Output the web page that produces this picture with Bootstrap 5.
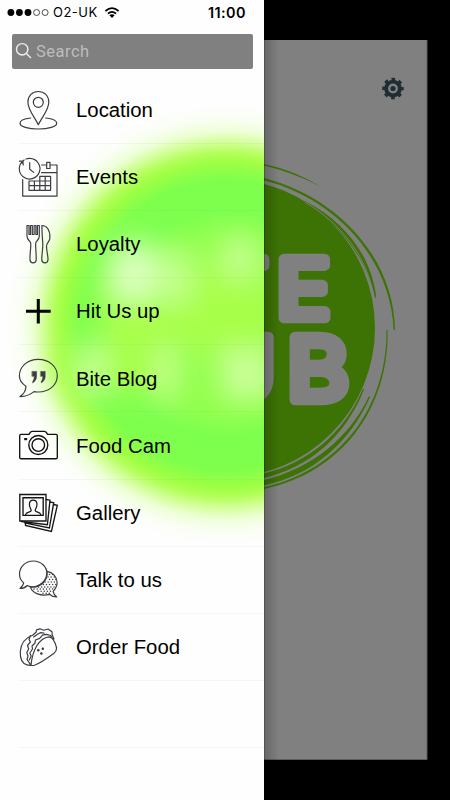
<!DOCTYPE html>
<html lang="en">
<head>
<meta charset="utf-8">
<meta name="viewport" content="width=device-width, initial-scale=1">
<title>Bite Club</title>
<link href="https://cdn.jsdelivr.net/npm/bootstrap@5.3.0/dist/css/bootstrap.min.css" rel="stylesheet">
<style>
body{background:#000;font-family:"Liberation Sans",Arial,sans-serif;color:#000}
.app-shell{width:450px;height:800px}
.side-panel{width:264px;background:#fefefe}
.panel-glow{top:0;left:0}
.status-row{height:24px;padding:1px 18px 0 7px;font-family:Inter,"Open Sans",sans-serif}
.carrier{font-size:13px;letter-spacing:.5px;font-weight:400;margin-left:1px}
.clock-text{font-size:14.4px;letter-spacing:.45px;font-weight:600}
.search-box{height:35.5px;margin:9.5px 11px 7.5px 12px;background:#808080;border-radius:2px;color:#bdbdbd;font:400 16.5px Roboto,sans-serif;letter-spacing:.5px;padding-left:3px}
.menu-row{height:67.2px;margin-left:18px;border-bottom:1px solid rgba(140,140,150,.07);font-size:20.35px}
.menu-label{padding-top:1px}
.menu-row svg{width:40px;height:40px;flex:none;margin-right:18px;fill:none;stroke:#3c3d42;stroke-width:1.2;stroke-linejoin:round;stroke-linecap:round}
.logo-word{font-family:Inter,sans-serif;font-weight:400;stroke-linejoin:round}
</style>
<script src="https://cdn.jsdelivr.net/npm/bootstrap@5.3.0/dist/js/bootstrap.bundle.min.js"></script>
</head>
<body>
<div class="app-shell d-flex overflow-hidden">
<aside class="side-panel position-relative overflow-hidden flex-shrink-0">
<svg class="panel-glow position-absolute" width="264" height="800" viewBox="0 0 264 800">
<defs>
<radialGradient id="glow" gradientUnits="userSpaceOnUse" cx="226" cy="325" r="220">
<stop offset="0" stop-color="#9cff4c"/><stop offset=".4" stop-color="#90ff4c"/><stop offset=".52" stop-color="#7dff4e"/><stop offset=".66" stop-color="#7fff4c"/><stop offset=".74" stop-color="#9eff44"/><stop offset=".78" stop-color="#b2ff58"/><stop offset=".83" stop-color="#d2ff98"/><stop offset=".88" stop-color="#edffd6"/><stop offset=".94" stop-color="#fafef4"/><stop offset="1" stop-color="#fefefe"/>
</radialGradient>
<filter id="soft" x="-60%" y="-60%" width="220%" height="220%"><feGaussianBlur stdDeviation="14"/></filter>
</defs>
<circle cx="226" cy="325" r="220" fill="url(#glow)"/>
<g filter="url(#soft)">
<path d="M60 350L145 345L264 325V365L215 360L190 310L165 390H62Z" fill="#a8ff4a"/>
<rect x="100" y="262" width="170" height="83" fill="#a8ff48"/>
<rect x="112" y="244" width="44" height="56" fill="#dcffc0"/>
<rect x="165" y="250" width="24" height="52" fill="#c8ff9a"/>
<rect x="222" y="236" width="36" height="42" fill="#c4ff90"/>
<rect x="80" y="345" width="26" height="50" fill="#c6ff98"/>
<rect x="157" y="348" width="20" height="52" fill="#caff98"/>
<rect x="222" y="350" width="50" height="50" fill="#caff9a"/>
</g>
</svg>
<div class="position-relative">
<div class="status-row d-flex align-items-center">
<svg width="45" height="10" viewBox="0 0 45 10" class="flex-shrink-0"><circle cx="3.9" cy="4.5" r="3.4"/><circle cx="12.4" cy="4.5" r="3.4"/><circle cx="21" cy="4.5" r="3.4"/><g fill="none" stroke="#222" stroke-width=".8"><circle cx="29.6" cy="4.5" r="3"/><circle cx="38.1" cy="4.5" r="3"/></g></svg>
<span class="carrier">O2-UK</span>
<svg class="ms-1" width="20" height="12" viewBox="-2.5 0 20 12" fill="none" stroke="#000" stroke-width="1.7"><path d="M.9 4Q7.5-1.6 14.1 4M3.4 6.7Q7.5 3 11.6 6.7"/><path d="M4.9 8.3Q7.5 6.3 10.1 8.3L7.5 11Z" fill="#000" stroke="none"/></svg>
<span class="clock-text ms-auto">11:00</span>
</div>
<div class="search-box d-flex align-items-center"><svg width="21" height="20" viewBox="0 0 21 20" fill="none" stroke="#eee" stroke-width="1.4"><circle cx="7.2" cy="8.3" r="5.7"/><path d="M11.3 12.5L16 17"/></svg><span>Search</span></div>
<nav>
<div class="menu-row d-flex align-items-center"><svg viewBox="0 0 40 40"><circle cx="20.3" cy="12.3" r="5"/><path d="M20.3 34.7C17.5 28.5 9.9 20 9.9 12.2C9.9 5.6 14.4 1.5 20.3 1.5S30.8 5.6 30.8 12.2C30.8 20 23.1 28.5 20.3 34.7Z"/><path d="M12.7 28C6.5 28.7 2 30.6 2 33.2C2 36.5 10 39 20.3 39S38.7 36.5 38.7 33.2C38.7 30.6 34 28.7 27.7 28"/></svg><span class="menu-label">Location</span></div>
<div class="menu-row d-flex align-items-center"><svg viewBox="0 0 40 40"><path d="M6.1 3A10.3 10.3 0 1 0 12 1.4Q9.8 1.3 8 2M1.5 4.2L5 4.2L5.2 8M5 4.2L4 6M11.7 5.5V12.2L15.7 15.4M4.7 22.7V39.2H39V8H32M28.7 8H23.6M23.6 15.7H39M28.7 5.3H32V11.5H28.7Z"/><path d="M21.7 19.3H32.6V33.3H11V24H32.6M11 28.7H32.6M16.4 24V33.3M21.8 19.3V33.3M27.2 19.3V33.3"/></svg><span class="menu-label">Events</span></div>
<div class="menu-row d-flex align-items-center"><svg viewBox="0 0 40 40"><path d="M9 1.5H11V10.5H12.5V1.5H14.3V10.5H16.1V1.5H17.9V10.5H19.4V1.5H21.3V12C21.3 16.5 17.6 16.4 17.6 20C17.6 25 18.4 31 18.2 35.7C18 39.8 12.1 39.8 12 35.7C11.8 31 12.8 25 12.8 20C12.8 16.4 9 16.5 9 12ZM23.9 1.5C29.5 1.8 32 7 31.9 14C31.8 18 28.5 18.4 28.5 22.5C28.5 27 30.2 32 30 35.7C29.8 39.8 23.9 39.8 23.8 35.7C23.6 31 25 25 24.8 20C24.6 16 23.9 9 23.9 1.5Z"/></svg><span class="menu-label">Loyalty</span></div>
<div class="menu-row d-flex align-items-center"><svg viewBox="0 0 40 40"><path d="M8 20.2H32.7M20.3 7.9V32.5" stroke="#000" stroke-width="3" stroke-linecap="butt"/></svg><span class="menu-label">Hit Us up</span></div>
<div class="menu-row d-flex align-items-center"><svg viewBox="0 0 40 40"><path d="M8 28.3C3.7 25.5 1.4 22 1.4 17.8C1.4 8.5 9.5 1.4 20.3 1.4S39.3 8.5 39.3 17.8S31 34 20.3 34Q17.5 34.1 16 33.6C12 36.8 7 38.8 2 38.6C5 36.7 7.8 33 8 28.3Z"/><path d="M14.2 13.4H18.6V19Q18.4 22.5 14.7 25V23.6Q16.3 21.5 16.3 18.3H14.2ZM22.8 13.4H27.2V19Q27 22.5 23.3 25V23.6Q24.9 21.5 24.9 18.3H22.8Z" fill="#3c3d42" stroke-width=".5"/></svg><span class="menu-label">Bite Blog</span></div>
<div class="menu-row d-flex align-items-center"><svg viewBox="0 0 40 40"><g stroke="#111" stroke-width="1.35"><path d="M3 8.4H11Q12.5 5.3 14 5.3H26.5Q28 5.3 29.7 8.4H38Q39.3 8.4 39.3 9.7V31.4Q39.3 32.7 38 32.7H3Q1.7 32.7 1.7 31.4V9.7Q1.7 8.4 3 8.4Z"/><circle cx="20.3" cy="19" r="9.5"/><circle cx="20.3" cy="19" r="6.3"/></g><path d="M6.2 12H9.2V14.2H6.2Z" fill="#111" stroke="none"/></svg><span class="menu-label">Food Cam</span></div>
<div class="menu-row d-flex align-items-center"><svg viewBox="0 0 40 40"><g stroke="#151515" stroke-width="1.35" stroke-linejoin="miter"><path d="M1.8 1.5H28V28H1.8ZM5 4.7H25.2V22.3H5Z"/><path d="M7.5 22C8 18.5 12.5 19.8 13.2 17.5C13.3 16 11.4 14.5 11.4 11.5C11.4 8.7 13 7.2 15.2 7.2S19 8.7 19 11.5C19 14.5 17.1 16 17.2 17.5C17.9 19.8 22.4 18.5 22.9 22" stroke-width="1.2"/><path d="M28.2 6.5L32 7.2L29.4 31.7L3.5 28.5M32 9L35.7 9.7L31.4 35L6.5 29.8M35.7 11.5L39.3 12.3L33.4 38.5L7.5 32.5V30.2"/></g></svg><span class="menu-label">Gallery</span></div>
<div class="menu-row d-flex align-items-center"><svg viewBox="0 0 40 40"><path d="M29 11.3C34.7 12.2 39.1 17 39.1 22.5C39.1 26.4 37.4 29 35.1 31.4Q35.6 34.5 38.7 37Q34.7 37.2 31.5 34.3C23 36.7 14.5 33.3 12.4 27.1C21.5 27.3 29.8 20.5 29 11.3Z"/><g stroke-width="1.4" stroke-dasharray=".1 3"><path d="M31.5 14.5H36M30 17H38M31.5 19.5H38M27 22H38M25.3 24.5H38M20.5 27H37M16 29H36M20 31.3H35M25 33.3H32"/></g><path d="M5.7 22.9C3 20.5 1.5 17.7 1.5 14.2C1.5 6.8 7.5 1 15.3 1S29 6.8 29 13.8S23 27 15.3 27Q11.7 27 9.2 25.5Q6.5 28.5 2 28.5Q5.2 25.9 5.7 22.9Z"/></svg><span class="menu-label">Talk to us</span></div>
<div class="menu-row d-flex align-items-center"><svg viewBox="0 0 40 40"><path d="M13 38.2C14.5 23 21 11 31 9.8Q36 10 38.6 21Q38.6 24 36 26.3C29 31.5 23 36 16.5 38.2Q14 39 9 37.8C3.5 36.5 2 31 2.3 24.5C3 16 8 10.5 15 8M12.4 8.5L11 12.5L12.4 15L9.5 18.5L10.7 22L8.8 25.5L10 29L9 32.5L12.5 37.7M11.3 33L13.2 29L11.8 26L14.5 22L14 19L17 16L17.4 13L21.7 11.4L24.5 8.2L28.2 7.3L32.7 8.5L34.5 12M15 8L18 5.3L18.5 2.8L22 1.8L25.8 3.3L30 2L34 4.8L34.2 8L36 12M15.7 10L19.5 7.3L22.3 5.7L26 6.2"/><g fill="#333" stroke="none"><circle cx="20.3" cy="23.3" r="1.2"/><circle cx="24.8" cy="21.7" r="1.2"/><circle cx="23.4" cy="26.5" r="1.2"/></g></svg><span class="menu-label">Order Food</span></div>
<div class="menu-row"></div>
</nav>
</div>
</aside>
<main class="flex-shrink-0">
<svg class="d-block" width="186" height="800" viewBox="264 0 186 800">
<defs><linearGradient id="edge"><stop offset="0" stop-opacity=".2"/><stop offset=".5" stop-opacity=".1"/><stop offset="1" stop-opacity="0"/></linearGradient></defs>
<rect x="264" width="186" height="800"/>
<rect x="264" y="40" width="163" height="720" fill="#808080"/>
<path d="M264 759.5H427V40" fill="none" stroke="#5c5c5c"/>
<circle cx="226" cy="328" r="149" fill="#3d7305"/>
<g fill="#3d7305">
<path d="M264 163.9Q294 170 321 186.7Q294 173 264 165.6Z"/>
<path d="M264 178C338 197 394 258 395 330L393.6 330C391 260 337 199 264 180.2Z"/>
<path d="M305 201C345 222 371 255 376.3 297L375 298C366 258 340 224 305 202.5Z"/>
<path d="M264 473.5C307 463 344 434 363 388.5L364 389.5C345 438 307 468 264 478Z"/>
<path d="M264 480C310 469 349 439 369 396L370 397C350 443 311 476 264 485.2Z"/>
<path d="M264 487.3C340 470 387 408 386.5 330L387.6 330C389 409 341 473 264 489Z"/>
</g>
<path d="M305 202C341 224 367 255 374.5 299" fill="none" stroke="#808080" stroke-width=".9"/>
<g class="logo-word" fill="#808080" stroke="#808080" stroke-width="10.5">
<text x="217" y="318" font-size="81" textLength="51" lengthAdjust="spacingAndGlyphs">T</text>
<text x="276.5" y="318" font-size="81" textLength="54" lengthAdjust="spacingAndGlyphs">E</text>
<text x="211" y="399.5" font-size="87" textLength="65" lengthAdjust="spacingAndGlyphs">U</text>
<text x="287" y="399.5" font-size="86.5" textLength="62" lengthAdjust="spacingAndGlyphs">B</text>
</g>
<g fill="none" stroke="#202d33"><circle cx="393" cy="88.5" r="6.9" stroke-width="3.9"/><circle cx="393" cy="88.5" r="9.3" stroke-width="3" stroke-dasharray="3.6 3.704" stroke-dashoffset="1.8"/><circle cx="393" cy="88.5" r="2.6" fill="#202d33" stroke="none"/></g>
<rect x="264" y="40" width="15" height="720" fill="url(#edge)"/>
<rect x="264" y="40" width="1" height="720" fill="#000" opacity=".2"/>
</svg>
</main>
</div>
</body>
</html>
